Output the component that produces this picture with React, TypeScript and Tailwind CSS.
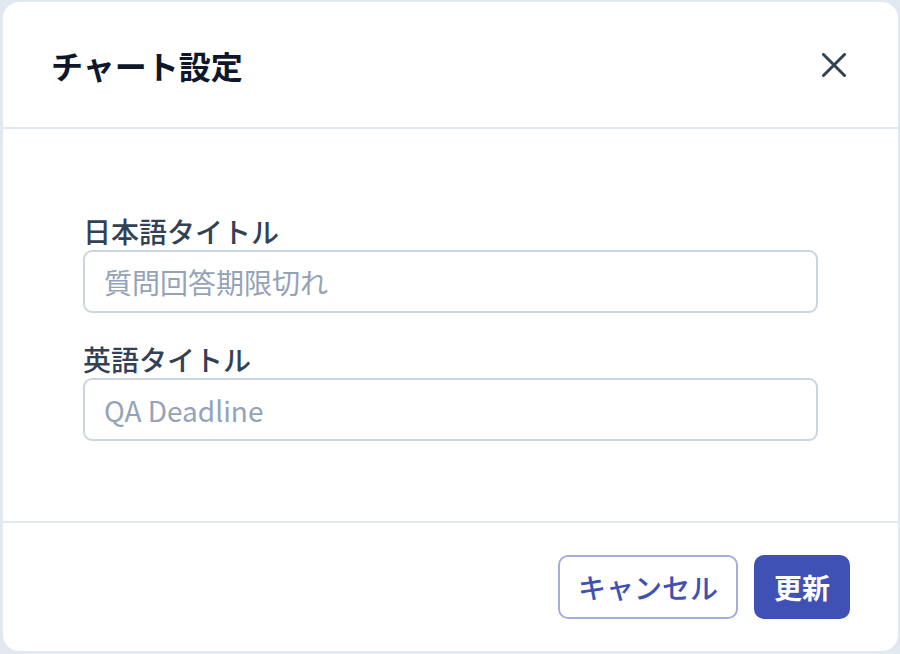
const font = {
  fontFamily: '"Noto Sans CJK JP", "Noto Sans", sans-serif',
};

function Field({ label, placeholder }: { label: string; placeholder: string }) {
  return (
    <div className="flex flex-col">
      <label className="text-[28px] font-medium leading-[36px] text-[#334155]">
        {label}
      </label>
      <input
        placeholder={placeholder}
        className="mt-[1px] h-[63px] w-full rounded-[9px] border-2 border-[#cbd5e1] bg-white px-[19px] text-[28px] text-[#334155] outline-none placeholder:text-[#94a3b8]"
      />
    </div>
  );
}

export default function App() {
  return (
    <div style={font} className="h-[654px] w-[900px] bg-[#e2e8f0] p-[2px] pl-[3px]">
      <div className="flex h-[649px] flex-col rounded-[16px] bg-white">
        <header className="flex h-[127px] items-center justify-between border-b-2 border-[#e2e8f0] pl-[48px] pr-[52px]">
          <h2 className="text-[32px] font-bold text-[#0f172a]">チャート設定</h2>
          <button className="text-[#334155]">
            <svg width="24" height="24" viewBox="0 0 24 24" fill="none" stroke="currentColor" strokeWidth="3" strokeLinecap="round">
              <path d="M1.5 1.5 22.5 22.5M22.5 1.5 1.5 22.5" />
            </svg>
          </button>
        </header>

        <div className="flex flex-1 flex-col gap-[28px] border-b-2 border-[#e2e8f0] px-[80px] pt-[84px]">
          <Field label="日本語タイトル" placeholder="質問回答期限切れ" />
          <Field label="英語タイトル" placeholder="QA Deadline" />
        </div>

        <footer className="flex h-[128px] items-center justify-end gap-[16px] pr-[48px]">
          <button className="h-[64px] rounded-[10px] border-2 border-[#a5addf] px-[18px] text-[28px] font-medium text-[#3f51b5]">
            キャンセル
          </button>
          <button className="h-[64px] rounded-[10px] bg-[#3f51b5] px-[20px] text-[28px] font-bold text-white">
            更新
          </button>
        </footer>
      </div>
    </div>
  );
}
